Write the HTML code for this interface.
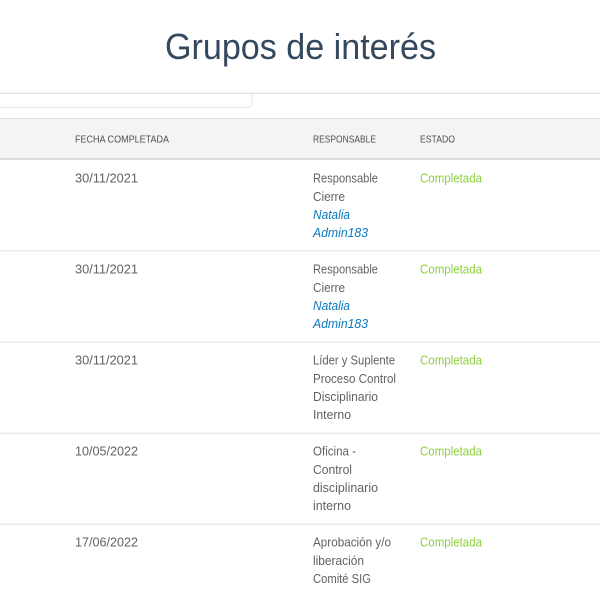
<!DOCTYPE html>
<html lang="es">
<head>
<meta charset="utf-8">
<title>Grupos de interés</title>
<style>
html,body{margin:0;padding:0;width:600px;height:600px;overflow:hidden;background:#fff}
svg{display:block}
text{font-family:"Liberation Sans",sans-serif}
.t{font-size:12.5px;fill:#626262}
.h{font-size:10px;fill:#505050}
.g{font-size:12.5px;fill:#8cd03c}
.l{font-size:12.5px;fill:#0b78bd;font-style:italic}
</style>
</head>
<body>
<svg width="600" height="600" viewBox="0 0 600 600" xmlns="http://www.w3.org/2000/svg">
<rect x="0" y="119" width="600" height="40" fill="#f4f4f4"/>
<rect x="0" y="92.700" width="600" height="1.300" fill="#e2e2e2"/>
<path d="M0 107.500H247a5 5 0 0 0 5-5V94" fill="none" stroke="#e6e6e6" stroke-width="1"/>
<rect x="0" y="118" width="600" height="1" fill="#e2e2e2"/>
<rect x="0" y="158" width="600" height="2" fill="#dcdcdc"/>
<rect x="0" y="250" width="600" height="1.500" fill="#ebebeb"/>
<rect x="0" y="341.500" width="600" height="1.500" fill="#ebebeb"/>
<rect x="0" y="432.500" width="600" height="1.500" fill="#ebebeb"/>
<rect x="0" y="523.500" width="600" height="1.500" fill="#ebebeb"/>

<text x="165" y="59" font-size="36" fill="#34495e" textLength="271" lengthAdjust="spacingAndGlyphs">Grupos de interés</text>

<text class="h" x="75" y="142.700" textLength="94" lengthAdjust="spacingAndGlyphs">FECHA COMPLETADA</text>
<text class="h" x="313" y="142.700" textLength="63" lengthAdjust="spacingAndGlyphs">RESPONSABLE</text>
<text class="h" x="420" y="142.700" textLength="35" lengthAdjust="spacingAndGlyphs">ESTADO</text>

<text class="t" x="75" y="182.700" textLength="63" lengthAdjust="spacingAndGlyphs">30/11/2021</text>
<text class="t" x="313" y="182.700" textLength="65" lengthAdjust="spacingAndGlyphs">Responsable</text>
<text class="t" x="313" y="200.800" textLength="32" lengthAdjust="spacingAndGlyphs">Cierre</text>
<text class="l" x="313" y="219" textLength="37" lengthAdjust="spacingAndGlyphs">Natalia</text>
<text class="l" x="313" y="237" textLength="55" lengthAdjust="spacingAndGlyphs">Admin183</text>
<text class="g" x="420" y="182.700" textLength="62" lengthAdjust="spacingAndGlyphs">Completada</text>

<text class="t" x="75" y="273.700" textLength="63" lengthAdjust="spacingAndGlyphs">30/11/2021</text>
<text class="t" x="313" y="273.700" textLength="65" lengthAdjust="spacingAndGlyphs">Responsable</text>
<text class="t" x="313" y="291.800" textLength="32" lengthAdjust="spacingAndGlyphs">Cierre</text>
<text class="l" x="313" y="310" textLength="37" lengthAdjust="spacingAndGlyphs">Natalia</text>
<text class="l" x="313" y="328" textLength="55" lengthAdjust="spacingAndGlyphs">Admin183</text>
<text class="g" x="420" y="273.700" textLength="62" lengthAdjust="spacingAndGlyphs">Completada</text>

<text class="t" x="75" y="364.700" textLength="63" lengthAdjust="spacingAndGlyphs">30/11/2021</text>
<text class="t" x="313" y="364.700" textLength="82" lengthAdjust="spacingAndGlyphs">Líder y Suplente</text>
<text class="t" x="313" y="382.800" textLength="83" lengthAdjust="spacingAndGlyphs">Proceso Control</text>
<text class="t" x="313" y="401" textLength="65" lengthAdjust="spacingAndGlyphs">Disciplinario</text>
<text class="t" x="313" y="419" textLength="38" lengthAdjust="spacingAndGlyphs">Interno</text>
<text class="g" x="420" y="364.700" textLength="62" lengthAdjust="spacingAndGlyphs">Completada</text>

<text class="t" x="75" y="455.700" textLength="63" lengthAdjust="spacingAndGlyphs">10/05/2022</text>
<text class="t" x="313" y="455.700" textLength="43" lengthAdjust="spacingAndGlyphs">Oficina -</text>
<text class="t" x="313" y="473.800" textLength="39" lengthAdjust="spacingAndGlyphs">Control</text>
<text class="t" x="313" y="492" textLength="65" lengthAdjust="spacingAndGlyphs">disciplinario</text>
<text class="t" x="313" y="510" textLength="38" lengthAdjust="spacingAndGlyphs">interno</text>
<text class="g" x="420" y="455.700" textLength="62" lengthAdjust="spacingAndGlyphs">Completada</text>

<text class="t" x="75" y="546.700" textLength="63" lengthAdjust="spacingAndGlyphs">17/06/2022</text>
<text class="t" x="313" y="546.700" textLength="78" lengthAdjust="spacingAndGlyphs">Aprobación y/o</text>
<text class="t" x="313" y="564.800" textLength="51" lengthAdjust="spacingAndGlyphs">liberación</text>
<text class="t" x="313" y="583" textLength="58" lengthAdjust="spacingAndGlyphs">Comité SIG</text>
<text class="g" x="420" y="546.700" textLength="62" lengthAdjust="spacingAndGlyphs">Completada</text>
</svg>
</body>
</html>
